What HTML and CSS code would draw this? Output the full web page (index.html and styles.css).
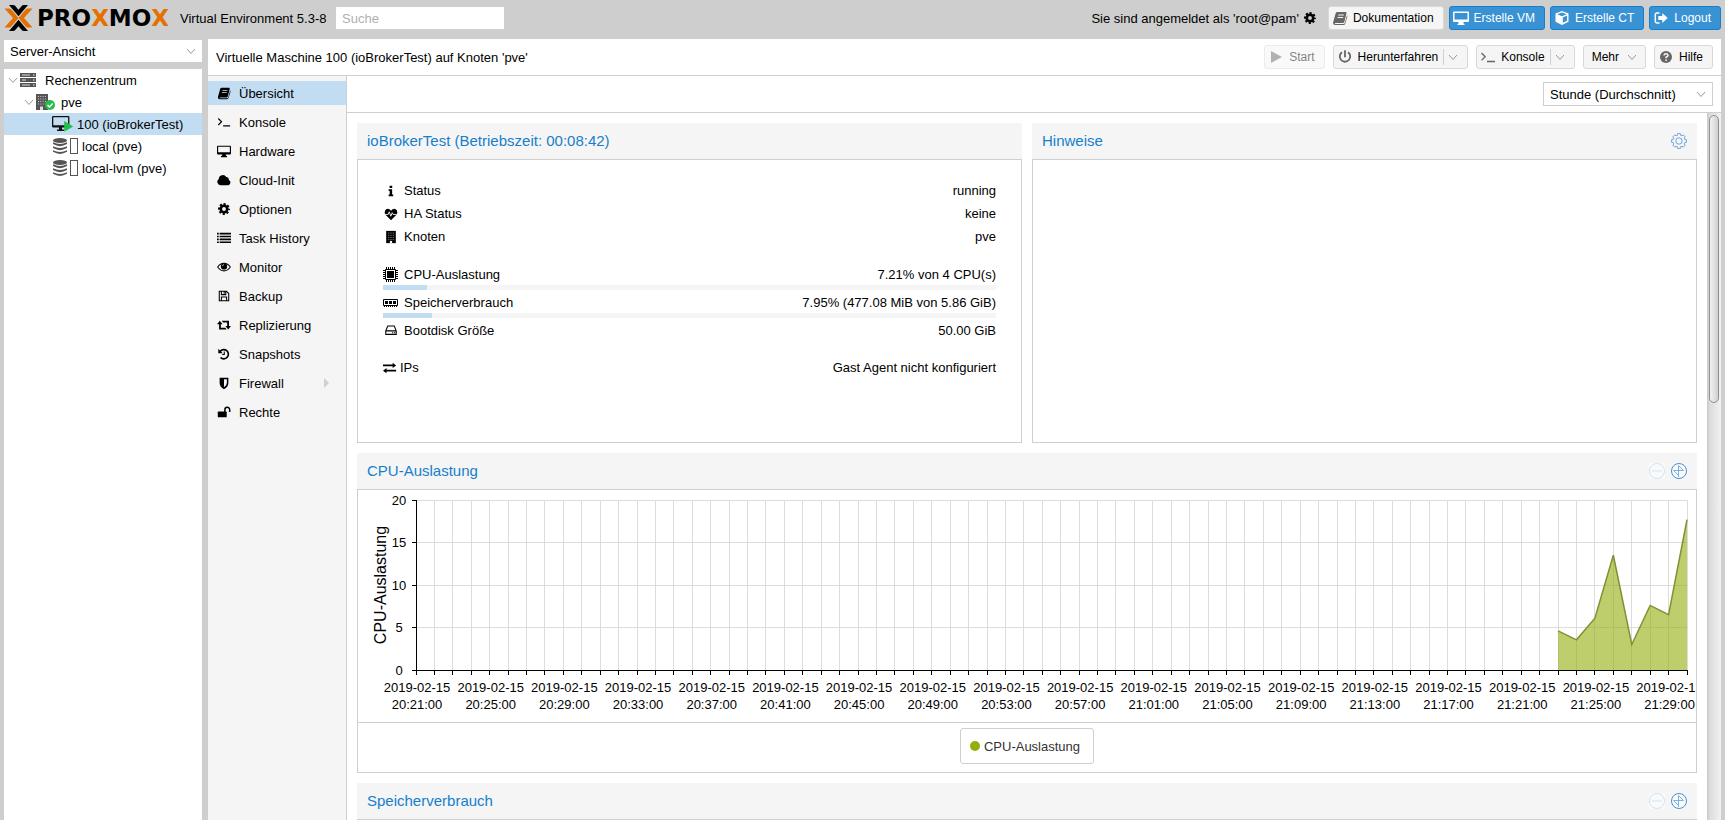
FILE: index.html
```html
<!DOCTYPE html>
<html lang="de">
<head>
<meta charset="utf-8">
<title>pve - Proxmox Virtual Environment</title>
<link rel="stylesheet" href="styles.css">
</head>
<body>
<svg class="sprite" aria-hidden="true">
  <symbol id="chevron" viewBox="0 0 10 10"><path d="M1 3l4 4.500 4-4.500" fill="none" stroke="currentColor"/></symbol>
  <symbol id="book" viewBox="0 0 16 16"><path fill="currentColor" fill-rule="evenodd" d="M5.500 2h8.300q1 .2.700 1.300L12.300 12q-.3 1-1.300 1H3.600q-.8 0-.8.500t.8.600h7.800q1 0 1.400-1L15 5.200q.7.500.4 1.400l-2.200 7.200q-.4 1.200-1.600 1.200H3.200Q1 15 1 12.800L3.600 3.400Q4 2 5.500 2zM6.400 4.500L6.100 5.500h5.600l.3-1zM5.700 7l-.3 1H11l.3-1z"/></symbol>
  <symbol id="terminal" viewBox="0 0 16 16"><path d="M1.500 4l3.700 3.700-3.700 3.700M7 12.500h8" fill="none" stroke="currentColor" stroke-width="1.300"/></symbol>
  <symbol id="desktop" viewBox="0 0 16 16"><path fill="currentColor" fill-rule="evenodd" d="M1.200 2h13.600q1.200 0 1.200 1.200v7.600q0 1.200-1.200 1.200H10v1l1.500 1v1h-7v-1L6 13v-1H1.200Q0 12 0 10.800V3.200Q0 2 1.200 2zM1.300 3.200v6.300h13.400V3.200z"/></symbol>
  <symbol id="desktop-solid" viewBox="0 0 16 16"><path fill="currentColor" d="M1 1.500h14q1 0 1 1v8.500q0 1-1 1h-4.500v1.500l1 .5v1h-7v-1l1-.5V12H1q-1 0-1-1V2.500q0-1 1-1z"/><path d="M1.500 3h13v6.500h-13z" fill="#3892d4"/></symbol>
  <symbol id="cloud" viewBox="0 0 16 16"><path fill="currentColor" d="M4 14a4 4 0 0 1-2-7.200A4.600 4.600 0 0 1 10.600 4.700 2.800 2.800 0 0 1 13.500 8 3.200 3.200 0 0 1 13 14z"/></symbol>
  <symbol id="gear" viewBox="0 0 16 16"><g fill="none" stroke="currentColor"><circle cx="8" cy="8" r="3.700" stroke-width="3"/><circle cx="8" cy="8" r="5.700" stroke-width="2.200" stroke-dasharray="2.480 2" stroke-dashoffset="1.240"/></g></symbol>
  <symbol id="list" viewBox="0 0 16 16"><path d="M0 3h2M3 3h13M0 6.300h2M3 6.300h13M0 9.600h2M3 9.600h13M0 12.900h2M3 12.900h13" stroke="currentColor" stroke-width="1.900"/></symbol>
  <symbol id="eye" viewBox="0 0 16 16"><path d="M.8 8Q3.600 3.600 8 3.600T15.200 8Q12.400 12.400 8 12.400T.8 8z" fill="none" stroke="currentColor" stroke-width="1.200"/><circle cx="8" cy="7.300" r="3.600" fill="currentColor"/><path d="M6.200 7a2 2 0 0 1 1.900-1.800" stroke="#f5f5f5" fill="none" stroke-width=".8"/></symbol>
  <symbol id="floppy" viewBox="0 0 16 16"><path d="M2.600 2.600h8.200l2.600 2.600v8.200H2.600zM5 2.600v3.800h5V2.600M5 13.400V9.200h6v4.200M8.200 3v2.500" fill="none" stroke="currentColor" stroke-width="1.200"/></symbol>
  <symbol id="retweet" viewBox="0 0 16 16"><path fill="currentColor" d="M3.200 3L6.400 7H4.400v4h5.100l1.500 2H2.400V7H0zM5.500 3h8.200v6H16l-3.200 4-3.200-4h2V5H7z"/></symbol>
  <symbol id="history" viewBox="0 0 16 16"><path d="M3.500 5A5.300 5.300 0 1 1 4 12" fill="none" stroke="currentColor" stroke-width="1.900"/><path d="M1.500 2v5h5z" fill="currentColor"/><path d="M8.300 5v3.500H6" fill="none" stroke="currentColor" stroke-width="1.200"/></symbol>
  <symbol id="shield" viewBox="0 0 16 16"><path fill="currentColor" fill-rule="evenodd" d="M3 2h10v6q0 4.500-5 7-5-2.500-5-7zM8 3.800v9Q11.300 10.800 11.300 8V3.800z"/></symbol>
  <symbol id="unlock" viewBox="0 0 16 16"><path fill="currentColor" d="M1.700 7.500h8.600q.8 0 .8.800v5q0 .8-.8.800H1.700q-.8 0-.8-.8v-5q0-.8.800-.8z"/><path d="M9 8V5.300a2.700 2.700 0 0 1 5.500 0V8" fill="none" stroke="currentColor" stroke-width="1.700"/></symbol>
  <symbol id="info" viewBox="0 0 16 16"><path fill="currentColor" d="M6.400 2h3v2.600h-3zM5.300 6h4v6h1.200v2H5.300v-2h1.200V8H5.300z"/></symbol>
  <symbol id="heart" viewBox="0 0 16 16"><path fill="currentColor" d="M8 15L2 9Q0 6.500 1.200 4 3 1 6.300 2.600L8 4.200l1.700-1.600Q13 1 14.800 4 16 6.500 14 9z"/><path d="M1.500 8.500h3.300l1.200-3 1.800 5L9.400 6.500l1 2h4" fill="none" stroke="#fff" stroke-width="1"/></symbol>
  <symbol id="building" viewBox="0 0 16 16"><path fill="currentColor" d="M2.500 1h11v14h-11z"/><path d="M4.500 3.500h7M4.500 6h7M4.500 8.500h7M4.500 11h7" stroke="#999" stroke-width="1" stroke-dasharray="1 1"/><path d="M6.700 12.500h2.600V15H6.700z" fill="#fff"/></symbol>
  <symbol id="cpu" viewBox="0 0 15 15"><path d="M3.500 0v15M5.500 0v15M7.500 0v15M9.500 0v15M11.500 0v15M0 3.500h15M0 5.500h15M0 7.500h15M0 9.500h15M0 11.500h15" stroke="currentColor"/><path d="M2.500 2.500h10v10h-10z" fill="#fff" stroke="currentColor"/><path d="M4 4h7v7H4z" fill="currentColor"/></symbol>
  <symbol id="memory" viewBox="0 0 15 15"><path d="M.5 4.500h14v6H.5z" fill="none" stroke="currentColor"/><path d="M2 6h3v3H2zM6 6h3v3H6zM10 6h3v3h-3z" fill="currentColor"/><path d="M1 11.500h13" stroke="currentColor" stroke-dasharray="1 1"/></symbol>
  <symbol id="hdd" viewBox="0 0 16 16"><path d="M2 9l2.300-5.500h7.400L14 9v4H2zM2 9h12M9.500 11h1M11.800 11h1" fill="none" stroke="currentColor" stroke-width="1.200" stroke-linejoin="round"/></symbol>
  <symbol id="exchange" viewBox="0 0 16 16"><path fill="currentColor" d="M0 4h11V2l4 3-4 3V6H0zM15 12H4v2l-4-3 4-3v2h11z"/></symbol>
  <symbol id="cube" viewBox="0 0 16 16"><path fill="currentColor" fill-rule="evenodd" d="M8 1l6.500 2.500v8.300L8 15l-6.500-3.200V3.500zM8 2.500L3.300 4.300 8 6.200l4.700-1.900zM8.800 7.500v5.300l4.300-2.100V5.600z"/></symbol>
  <symbol id="signout" viewBox="0 0 16 16"><path d="M6.500 3H4Q2.300 3 2.300 4.700v6.600Q2.300 13 4 13h2.500" fill="none" stroke="currentColor" stroke-width="1.500"/><path fill="currentColor" d="M5.300 6h4V3l5.400 5-5.400 5v-3h-4z"/></symbol>
  <symbol id="play" viewBox="0 0 16 16"><path fill="currentColor" d="M3 2l11 6-11 6z"/></symbol>
  <symbol id="power" viewBox="0 0 16 16"><path d="M5 3.300a5.200 5.200 0 1 0 6 0M8 1.200v7" fill="none" stroke="currentColor" stroke-width="1.800"/></symbol>
  <symbol id="help" viewBox="0 0 16 16"><circle cx="8" cy="8" r="6" fill="currentColor"/><path d="M6 6.500Q6.200 4.800 8 4.800t2 1.600Q10 7.300 8.100 8.300v1M8.100 10.400v1.600" fill="none" stroke="#f5f5f5" stroke-width="1.600"/></symbol>
  <symbol id="server" viewBox="0 0 16 14"><path d="M0 0h16v4H0zM0 5h16v4H0zM0 10h16v4H0z" fill="#555"/><path d="M2 2h8M2 7h4M2 12h8" stroke="#ddd"/><path d="M13 2h1.500M13 7h1.500M13 12h1.500" stroke="#fff"/></symbol>
  <symbol id="node" viewBox="0 0 20 16"><path d="M0 0h12v16H0z" fill="#555"/><path d="M2 2.500h8M2 5h8M2 7.500h8M2 10h8" stroke="#ccc" stroke-width="1" stroke-dasharray="1 1.300"/><path d="M4 12.500h3V16H4z" fill="#ddd"/><circle cx="14" cy="11" r="5" fill="#21bf4b"/><path d="M11.500 11l2 2 3.200-3.600" fill="none" stroke="#fff" stroke-width="1.500"/></symbol>
  <symbol id="vm" viewBox="0 0 22 16"><path fill="#111" fill-rule="evenodd" d="M1.200 0h15q1.200 0 1.200 1.200v9q0 1.200-1.200 1.200H10v2h2V15H5v-1.600h2v-2H1.200Q0 11.400 0 10.200v-9Q0 0 1.200 0zM1.300 1.200v8h14.800v-8z"/><path d="M12.200 5l9 5.500-9 5.300z" fill="#21bf4b"/></symbol>
  <symbol id="storage" viewBox="0 0 14 16"><g fill="#555"><ellipse cx="7" cy="2.500" rx="7" ry="2.500"/><path d="M0 4.200q7 3.600 14 0v1.900q-7 4.200-14 0zM0 8.200q7 3.600 14 0v1.900q-7 4.200-14 0zM0 12.200q7 3.600 14 0v1.600q-7 4.200-14 0z"/></g></symbol>
  <symbol id="cog-outline" viewBox="-8 -8 16 16"><g fill="none" stroke="currentColor"><path d="M5.800-1.500L7.400-1.400V1.400L5.800 1.500 5.200 3 6.200 4.200 4.200 6.200 3 5.200 1.500 5.800 1.400 7.400H-1.400L-1.500 5.800-3 5.200-4.200 6.200-6.200 4.200-5.200 3-5.800 1.500-7.400 1.400V-1.400L-5.800-1.500-5.200-3-6.200-4.200-4.200-6.200-3-5.200-1.500-5.800-1.400-7.400H1.400L1.500-5.800 3-5.200 4.200-6.200 6.200-4.200 5.200-3z"/><circle r="3.200"/></g></symbol>
  <symbol id="minus" viewBox="0 0 16 16"><path d="M0 0h16v16H0z" fill="#fafafa"/><circle cx="8" cy="8" r="7.500" fill="none" stroke="currentColor"/><path d="M3 8h10" stroke="currentColor"/></symbol>
  <symbol id="restore" viewBox="0 0 16 16"><circle cx="8" cy="8" r="7.500" fill="#f8fbfe" stroke="#4a90c8"/><path d="M7.500 14V2.500L12.500 7.500H2.500L7.500 12.500" fill="none" stroke="#7db1e0"/></symbol>
</svg>

<header class="topbar">
  <div class="logo">
    <svg class="logo-mark" viewBox="0 0 28 26" aria-hidden="true"><path fill="#e57000" d="M0 3.500h4.500q1.500 0 2.500 1.200L14 13l-7 8.300q-1 1.200-2.500 1.200H0L8.500 13zM28 3.500h-4.500q-1.500 0-2.500 1.200L14 13l7 8.300q1 1.200 2.500 1.200H28L19.500 13z"/><path d="M4.500 0h4q1.500 0 2.500 1.200l3 3.600 3-3.600Q18 0 19.500 0h4L14 11.200zM4.500 26h4q1.500 0 2.500-1.200l3-3.600 3 3.600q1 1.200 2.500 1.200h4L14 14.800z"/></svg>
    <span class="wordmark">PRO<b>X</b>MO<b>X</b></span>
  </div>
  <span class="version">Virtual Environment 5.3-8</span>
  <input class="search" type="search" placeholder="Suche" aria-label="Suche">
  <div class="account">
    <span>Sie sind angemeldet als 'root@pam'</span>
    <svg class="icon-sm"><use href="#gear"/></svg>
  </div>
  <div class="top-actions">
    <button class="btn"><svg class="icon"><use href="#book"/></svg>Dokumentation</button>
    <button class="btn btn-primary"><svg class="icon"><use href="#desktop-solid"/></svg>Erstelle VM</button>
    <button class="btn btn-primary"><svg class="icon"><use href="#cube"/></svg>Erstelle CT</button>
    <button class="btn btn-primary"><svg class="icon"><use href="#signout"/></svg>Logout</button>
  </div>
</header>

<div class="workspace">
  <aside class="sidebar">
    <div class="picker">
      <select aria-label="Ansicht"><option>Server-Ansicht</option></select>
      <svg class="chevron"><use href="#chevron"/></svg>
    </div>
    <ul class="tree">
      <li class="level-0"><svg class="chevron"><use href="#chevron"/></svg><svg class="tree-icon wide"><use href="#server"/></svg><span>Rechenzentrum</span></li>
      <li class="level-1"><svg class="chevron"><use href="#chevron"/></svg><svg class="tree-icon node"><use href="#node"/></svg><span>pve</span></li>
      <li class="level-2 selected"><svg class="tree-icon vm"><use href="#vm"/></svg><span>100 (ioBrokerTest)</span></li>
      <li class="level-2"><svg class="tree-icon disk"><use href="#storage"/></svg><i class="usage"></i><span>local (pve)</span></li>
      <li class="level-2"><svg class="tree-icon disk"><use href="#storage"/></svg><i class="usage"></i><span>local-lvm (pve)</span></li>
    </ul>
  </aside>

  <main class="content">
    <div class="titlebar">
      <h1>Virtuelle Maschine 100 (ioBrokerTest) auf Knoten 'pve'</h1>
      <button class="btn" disabled><svg class="icon"><use href="#play"/></svg>Start</button>
      <button class="btn"><svg class="icon"><use href="#power"/></svg>Herunterfahren<span class="split"><svg class="chevron"><use href="#chevron"/></svg></span></button>
      <button class="btn"><svg class="icon"><use href="#terminal"/></svg>Konsole<span class="split"><svg class="chevron"><use href="#chevron"/></svg></span></button>
      <button class="btn btn-menu">Mehr<svg class="chevron"><use href="#chevron"/></svg></button>
      <button class="btn"><svg class="icon"><use href="#help"/></svg>Hilfe</button>
    </div>

    <div class="columns">
      <nav class="menu">
        <a class="active" href="#"><svg class="icon-sm"><use href="#book"/></svg>Übersicht</a>
        <a href="#"><svg class="icon-sm"><use href="#terminal"/></svg>Konsole</a>
        <a href="#"><svg class="icon-sm"><use href="#desktop"/></svg>Hardware</a>
        <a href="#"><svg class="icon-sm"><use href="#cloud"/></svg>Cloud-Init</a>
        <a href="#"><svg class="icon-sm"><use href="#gear"/></svg>Optionen</a>
        <a href="#"><svg class="icon-sm"><use href="#list"/></svg>Task History</a>
        <a href="#"><svg class="icon-sm"><use href="#eye"/></svg>Monitor</a>
        <a href="#"><svg class="icon-sm"><use href="#floppy"/></svg>Backup</a>
        <a href="#"><svg class="icon-sm"><use href="#retweet"/></svg>Replizierung</a>
        <a href="#"><svg class="icon-sm"><use href="#history"/></svg>Snapshots</a>
        <a href="#"><svg class="icon-sm"><use href="#shield"/></svg>Firewall<i class="more"></i></a>
        <a href="#"><svg class="icon-sm"><use href="#unlock"/></svg>Rechte</a>
      </nav>

      <section class="detail">
        <div class="toolbar">
          <div class="picker bordered">
            <select aria-label="Zeitraum"><option>Stunde (Durchschnitt)</option></select>
            <svg class="chevron"><use href="#chevron"/></svg>
          </div>
        </div>
        <div class="viewport">
          <div class="panels">
            <article class="panel">
              <header><h2>ioBrokerTest (Betriebszeit: 00:08:42)</h2></header>
              <div class="panel-body status">
                <div class="row"><svg class="icon-sm"><use href="#info"/></svg><span>Status</span><output>running</output></div>
                <div class="row"><svg class="icon-sm"><use href="#heart"/></svg><span>HA Status</span><output>keine</output></div>
                <div class="row"><svg class="icon-sm"><use href="#building"/></svg><span>Knoten</span><output>pve</output></div>
                <div class="row tall spaced"><svg class="icon-px"><use href="#cpu"/></svg><span>CPU-Auslastung</span><output>7.21% von 4 CPU(s)</output></div>
                <div class="bar"><div style="width:7.21%"></div></div>
                <div class="row tall"><svg class="icon-px"><use href="#memory"/></svg><span>Speicherverbrauch</span><output>7.95% (477.08 MiB von 5.86 GiB)</output></div>
                <div class="bar"><div style="width:7.95%"></div></div>
                <div class="row tall"><svg class="icon-sm"><use href="#hdd"/></svg><span>Bootdisk Größe</span><output>50.00 GiB</output></div>
                <div class="row spaced tight"><svg class="icon-sm"><use href="#exchange"/></svg><span>IPs</span><output>Gast Agent nicht konfiguriert</output></div>
              </div>
            </article>
            <article class="panel">
              <header><h2>Hinweise</h2><button class="tool" aria-label="Bearbeiten"><svg><use href="#cog-outline"/></svg></button></header>
              <div class="panel-body"></div>
            </article>
            <article class="panel full">
              <header><h2>CPU-Auslastung</h2><button class="tool faded" aria-label="Zoom zurück" disabled><svg><use href="#minus"/></svg></button><button class="tool" aria-label="Zurücksetzen"><svg><use href="#restore"/></svg></button></header>
              <div class="panel-body chart-body">
                <svg class="chart" id="cpu-chart" role="img" aria-label="CPU-Auslastung"></svg>
                <div class="legend"><button><i></i>CPU-Auslastung</button></div>
              </div>
            </article>
            <article class="panel full">
              <header><h2>Speicherverbrauch</h2><button class="tool faded" aria-label="Zoom zurück" disabled><svg><use href="#minus"/></svg></button><button class="tool" aria-label="Zurücksetzen"><svg><use href="#restore"/></svg></button></header>
              <div class="panel-body"></div>
            </article>
          </div>
          <div class="scrollbar"><div class="thumb"></div></div>
        </div>
      </section>
    </div>
  </main>
</div>
<script src="chart.js"></script>
</body>
</html>
```
FILE: styles.css
```css
* { box-sizing: border-box; }
body {
  margin: 0;
  height: 100vh;
  display: flex;
  flex-direction: column;
  overflow: hidden;
  background: #cecece;
  color: #000;
  font: 13px/17px "Liberation Sans", Arial, sans-serif;
}
button, input, select { font: inherit; color: inherit; margin: 0; }
h1, h2, ul { margin: 0; padding: 0; font: inherit; }
svg { display: block; flex: none; }
.sprite { position: absolute; width: 0; height: 0; }
.icon { width: 16px; height: 16px; }
.icon-sm { width: 14px; height: 14px; }
.icon-px { width: 15px; height: 15px; }
.chevron { width: 10px; height: 10px; color: #999; }

.topbar { flex: none; height: 39px; padding: 0 4px 3px; display: flex; align-items: center; }
.logo { width: 176px; display: flex; align-items: center; gap: 4px; }
.logo-mark { width: 29px; height: 26px; }
.wordmark { font: bold 23px/26px "DejaVu Sans", sans-serif; }
.wordmark b { color: #e57000; }
.version { width: 156px; white-space: nowrap; }
.search { width: 168px; height: 22px; border: 0; padding: 0 6px; background: #fff; outline: 0; appearance: none; }
.search::placeholder { color: #b0b0b0; }
.account { margin-left: auto; display: flex; align-items: center; gap: 4px; white-space: nowrap; }
.top-actions { display: flex; gap: 5px; margin-left: 11px; }

.btn {
  height: 24px;
  padding: 0 9px 0 3px;
  display: flex;
  align-items: center;
  gap: 5px;
  border: 1px solid #d8d8d8;
  border-radius: 3px;
  background: #f5f5f5;
  font-size: 12px;
  white-space: nowrap;
}
.btn .icon { color: #666; }
.btn:disabled { color: #000; opacity: .5; }
.btn-primary { background: #3892d4; border-color: #157fcc; color: #fff; }
.btn-primary .icon { color: #fff; }
.btn-menu { padding: 0 8px; gap: 8px; }
.split { height: 16px; padding-left: 4px; border-left: 1px solid #d0d0d0; display: flex; align-items: center; }

.workspace { flex: 1; min-height: 0; display: flex; gap: 6px; padding: 0 4px; }
.sidebar { flex: none; width: 198px; padding-top: 1px; display: flex; flex-direction: column; gap: 7px; }
.picker { position: relative; height: 22px; background: #fff; }
.picker select { appearance: none; width: 100%; height: 100%; border: 0; padding: 0 24px 0 6px; background: transparent; outline: 0; }
.picker .chevron { position: absolute; right: 6px; top: 6px; pointer-events: none; }
.picker.bordered { width: 170px; height: 24px; border: 1px solid #cfcfcf; }
.tree { flex: 1; background: #fff; list-style: none; }
.tree li { height: 22px; display: flex; align-items: center; white-space: nowrap; }
.level-0 { padding-left: 4px; }
.level-1 { padding-left: 20px; }
.level-2 { padding-left: 48px; }
.selected { background: #c2ddf2; }
.tree-icon { height: 16px; }
.tree .chevron { margin-right: 2px; }
.wide { width: 16px; margin-right: 9px; }
.node { width: 20px; margin-right: 5px; }
.vm { width: 22px; margin-right: 3px; }
.disk { width: 14px; margin: 0 3px 0 1px; }
.usage { width: 8px; height: 16px; border: 1px solid #555; margin-right: 4px; }

.content { flex: 1; min-width: 0; display: flex; flex-direction: column; background: #fff; }
.titlebar { flex: none; height: 37px; padding: 0 8px; display: flex; align-items: center; gap: 8px; border-bottom: 1px solid #cfcfcf; }
.titlebar h1 { flex: 1; }
.columns { flex: 1; min-height: 0; display: flex; }
.menu { flex: none; width: 139px; padding-top: 5px; display: flex; flex-direction: column; gap: 5px; background: #f5f5f5; border-right: 1px solid #cfcfcf; }
.menu a { height: 24px; padding-left: 9px; display: flex; align-items: center; gap: 8px; color: #000; text-decoration: none; }
.menu .active { background: #c2ddf2; }
.more { margin-left: auto; margin-right: 17px; border: 5px solid transparent; border-left-color: #cfcfcf; border-right: 0; }

.detail { flex: 1; min-width: 0; display: flex; flex-direction: column; }
.toolbar { flex: none; height: 37px; padding: 0 8px; display: flex; align-items: center; justify-content: flex-end; border-bottom: 1px solid #cfcfcf; }
.viewport { flex: 1; min-height: 0; display: flex; }
.panels { flex: 1; min-width: 0; padding: 10px; display: grid; grid-template-columns: 1fr 1fr; grid-auto-rows: 320px; gap: 10px; overflow: hidden; }
.panel { min-width: 0; display: flex; flex-direction: column; }
.panel.full { grid-column: 1 / -1; }
.panel header { height: 36px; padding: 0 10px; display: flex; align-items: center; gap: 6px; background: #f5f5f5; }
.panel h2 { flex: 1; color: #157fcc; font-size: 15px; line-height: 20px; }
.panel-body { flex: 1; min-height: 0; border: 1px solid #cfcfcf; }
.tool { width: 16px; height: 16px; padding: 0; border: 0; background: none; color: #6ea6dc; }
.tool svg { width: 16px; height: 16px; }
.tool.faded { color: #cfe3f3; }

.status { padding: 19px 25px; }
.row { height: 23px; display: flex; align-items: center; gap: 6px; }
.row .icon-sm { margin-left: 1px; }
.row output { margin-left: auto; }
.row.tall { height: 22px; }
.row.spaced { margin-top: 15px; }
.row.tight { gap: 3px; }
.row.tight .icon-sm { margin-left: 0; }
.bar { height: 5px; margin-bottom: 1px; background: #f5f5f5; }
.bar div { height: 100%; background: #c2ddf2; }

.chart-body { display: flex; flex-direction: column; }
.chart { width: 100%; height: 232px; overflow: hidden; fill: #000; }
.chart .grid { stroke: #dcdcdc; fill: none; }
.chart .axis { stroke: #000; fill: none; }
.chart .area { fill: #94ae0a; fill-opacity: .6; }
.chart .line { stroke: #7d9236; stroke-width: 1.5; fill: none; }
.chart .title { font-size: 16px; }
.legend { flex: 1; padding-top: 5px; border-top: 1px solid #cfcfcf; display: flex; justify-content: center; align-items: flex-start; }
.legend button { height: 36px; padding: 0 13px 0 9px; display: flex; align-items: center; gap: 4px; border: 1px solid #cfcfcf; border-radius: 3px; background: #fff; color: #333; }
.legend i { width: 10px; height: 10px; border-radius: 50%; background: #94ae0a; }

.scrollbar { flex: none; width: 14px; padding: 2px; background: linear-gradient(90deg, #c8c8c8, #dcdcdc 20%, #f2f2f2); }
.thumb { height: 41%; border: 1px solid #8f8f8f; border-radius: 5px; background: linear-gradient(90deg, #f2f2f2, #d0d0d0); }
```
FILE: chart.js
```js
// Draws the hourly CPU usage chart, one grid line per minute.
const svg = document.getElementById('cpu-chart');
const samples = [4.6, 3.55, 6.1, 13.5, 3, 7.6, 6.5, 17.7];
const minutes = 69;
const startMinute = 20 * 60 + 21;
const plot = { left: 58, top: 10, bottom: 180, right: 9 };

function add(name, attrs, text) {
  const el = document.createElementNS('http://www.w3.org/2000/svg', name);
  for (const key in attrs) el.setAttribute(key, attrs[key]);
  if (text) el.textContent = text;
  svg.appendChild(el);
}

function draw() {
  svg.replaceChildren();
  const right = svg.clientWidth - plot.right;
  const x = i => plot.left + (right - plot.left) * i / minutes;
  const y = v => plot.bottom - (plot.bottom - plot.top) * v / 20;
  const snap = v => Math.floor(v) + 0.5;
  let grid = '';
  let axis = `M${snap(plot.left)} ${plot.top}V${snap(plot.bottom)}H${snap(right)}`;

  for (let v = 0; v <= 20; v += 5) {
    if (v) grid += `M${plot.left} ${snap(y(v))}H${right}`;
    axis += `M${plot.left - 4} ${snap(y(v))}h5`;
    add('text', { x: plot.left - 17, y: snap(y(v)) + 4, 'text-anchor': 'middle' }, String(v));
  }
  for (let i = 0; i <= minutes; i++) {
    grid += `M${snap(x(i))} ${plot.top}V${plot.bottom}`;
    axis += `M${snap(x(i))} ${plot.bottom}v5`;
    if (i % 4 === 0) {
      const m = startMinute + i;
      const time = `${Math.floor(m / 60)}:${String(m % 60).padStart(2, '0')}:00`;
      add('text', { x: x(i) + 1, y: 202, 'text-anchor': 'middle' }, '2019-02-15');
      add('text', { x: x(i) + 1, y: 219, 'text-anchor': 'middle' }, time);
    }
  }
  add('path', { d: grid, class: 'grid' });
  const first = minutes - samples.length + 1;
  const points = samples.map((v, i) => `${x(first + i)},${y(v)}`).join(' L');
  add('path', { d: `M${x(first)},${plot.bottom} L${points} V${plot.bottom}Z`, class: 'area' });
  add('path', { d: `M${points}`, class: 'line' });
  add('path', { d: axis, class: 'axis' });
  add('text', { class: 'title', 'text-anchor': 'middle', transform: 'translate(28 95) rotate(-90)' }, 'CPU-Auslastung');
}
draw();
window.addEventListener('resize', draw);
```
